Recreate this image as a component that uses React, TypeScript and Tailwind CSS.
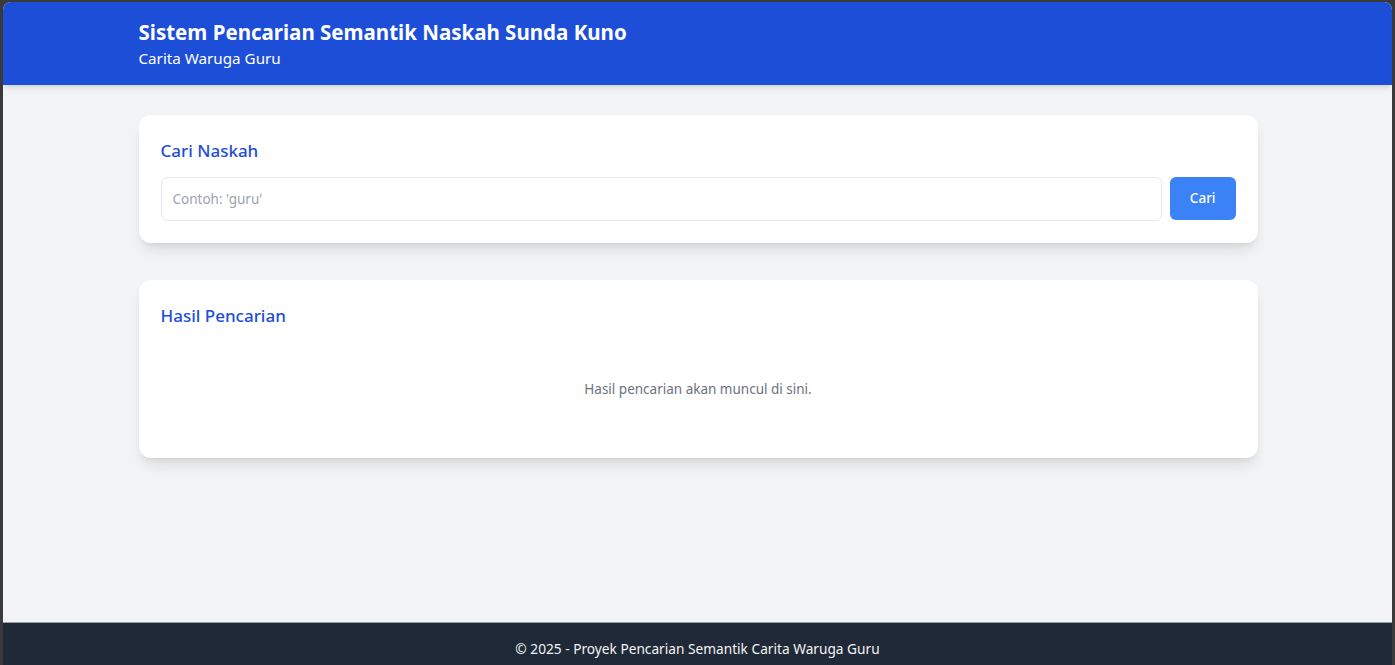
export default function App() {
  return (
    <div
      className="h-screen bg-[#3a3a3a] pt-[2px] px-[3px] overflow-hidden"
      style={{ fontFamily: '"Noto Sans", "Open Sans", sans-serif' }}
    >
      <div className="flex h-full flex-col overflow-hidden rounded-t-lg bg-[#f3f4f6]">
        {/* Header */}
        <header className="bg-[#1d4ed8] text-white shadow-md">
          <div className="mx-auto max-w-6xl pl-[17px] pr-4 pt-[16px] pb-[15px]">
            <h1 className="text-[20.5px] font-bold leading-7">Sistem Pencarian Semantik Naskah Sunda Kuno</h1>
            <p className="text-[15.2px] leading-6">Carita Waruga Guru</p>
          </div>
        </header>

        {/* Main */}
        <main className="flex-1">
          <div className="mx-auto max-w-6xl pl-[17px] pr-4 pt-[30px]">
            <section className="rounded-xl bg-white p-[22px] shadow-lg">
              <h2 className="mb-3 text-[17px] font-medium leading-7 text-[#1d4ed8]">Cari Naskah</h2>
              <div className="flex gap-2">
                <input
                  type="text"
                  placeholder="Contoh: 'guru'"
                  className="h-[44px] flex-1 rounded-md border border-gray-200 px-[11px] text-[13.5px] text-gray-700 placeholder:text-[#9ca3af] outline-none"
                />
                <button className="h-[43px] rounded-md bg-[#3b82f6] px-5 text-[13.5px] font-medium text-white">
                  Cari
                </button>
              </div>
            </section>

            <section className="mt-[37px] rounded-xl bg-white p-[22px] shadow-lg">
              <h2 className="mb-3 text-[17px] font-medium leading-7 text-[#1d4ed8]">Hasil Pencarian</h2>
              <p className="py-[37px] text-center text-[13.5px] leading-5 text-[#6b7280]">
                Hasil pencarian akan muncul di sini.
              </p>
            </section>
          </div>
        </main>

        {/* Footer */}
        <footer className="h-[43px] border-t border-gray-400 bg-[#1f2937] pt-[16px] text-center text-[13.7px] leading-5 text-gray-100">
          © 2025 - Proyek Pencarian Semantik Carita Waruga Guru
        </footer>
      </div>
    </div>
  );
}
